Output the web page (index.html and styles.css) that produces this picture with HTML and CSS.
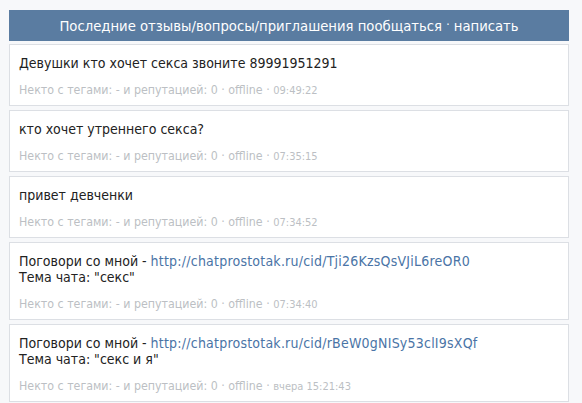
FILE: index.html
```html
<!DOCTYPE html>
<html lang="ru">
<head>
<meta charset="utf-8">
<link rel="stylesheet" href="styles.css">
</head>
<body>
<div class="wrap">
  <div class="header">Последние отзывы/вопросы/приглашения пообщаться <span class="sep">·</span> <a class="hlink" href="#">написать</a></div>
  <div class="card">
    <div class="msg">Девушки кто хочет секса звоните 89991951291</div>
    <div class="meta">Некто с тегами: - и репутацией: 0 · offline · <span class="time">09:49:22</span></div>
  </div>
  <div class="card">
    <div class="msg">кто хочет утреннего секса?</div>
    <div class="meta">Некто с тегами: - и репутацией: 0 · offline · <span class="time">07:35:15</span></div>
  </div>
  <div class="card">
    <div class="msg">привет девченки</div>
    <div class="meta">Некто с тегами: - и репутацией: 0 · offline · <span class="time">07:34:52</span></div>
  </div>
  <div class="card">
    <div class="msg">Поговори со мной - <a class="link" href="#">http://chatprostotak.ru/cid/Tji26KzsQsVJiL6reOR0</a><br>Тема чата: "секс"</div>
    <div class="meta">Некто с тегами: - и репутацией: 0 · offline · <span class="time">07:34:40</span></div>
  </div>
  <div class="card">
    <div class="msg">Поговори со мной - <a class="link" href="#">http://chatprostotak.ru/cid/rBeW0gNISy53clI9sXQf</a><br>Тема чата: "секс и я"</div>
    <div class="meta">Некто с тегами: - и репутацией: 0 · offline · <span class="time">вчера 15:21:43</span></div>
  </div>
</div>
</body>
</html>
```
FILE: styles.css
```css
html, body {
  margin: 0;
  padding: 0;
  background: #f7f8fa;
}
body {
  font-family: "DejaVu Sans Condensed", "DejaVu Sans", sans-serif;
  color: #222;
}
.wrap {
  width: 560px;
  padding: 10px 0 0 9px;
}
.header {
  height: 31px;
  line-height: 31px;
  background: #5a7ca1;
  color: #fff;
  text-align: center;
  font-size: 14.7px;
  margin-bottom: 3px;
}
.header .sep {
  font-size: 12px;
  line-height: 10px;
  vertical-align: 2px;
}
.hlink {
  color: #fff;
  text-decoration: none;
}
.card {
  background: #fff;
  border: 1px solid #dcdfe4;
  padding: 10px 9px 8px;
  margin-bottom: 4px;
}
.msg {
  font-size: 14px;
  line-height: 16px;
}
.link {
  color: #4a74a6;
  text-decoration: none;
  letter-spacing: 0.22px;
}
.meta {
  margin-top: 12px;
  height: 14px;
  font-size: 12.3px;
  line-height: 14px;
  color: #bcbfc4;
  white-space: nowrap;
}
.time {
  font-size: 11px;
  line-height: 10px;
}
```
